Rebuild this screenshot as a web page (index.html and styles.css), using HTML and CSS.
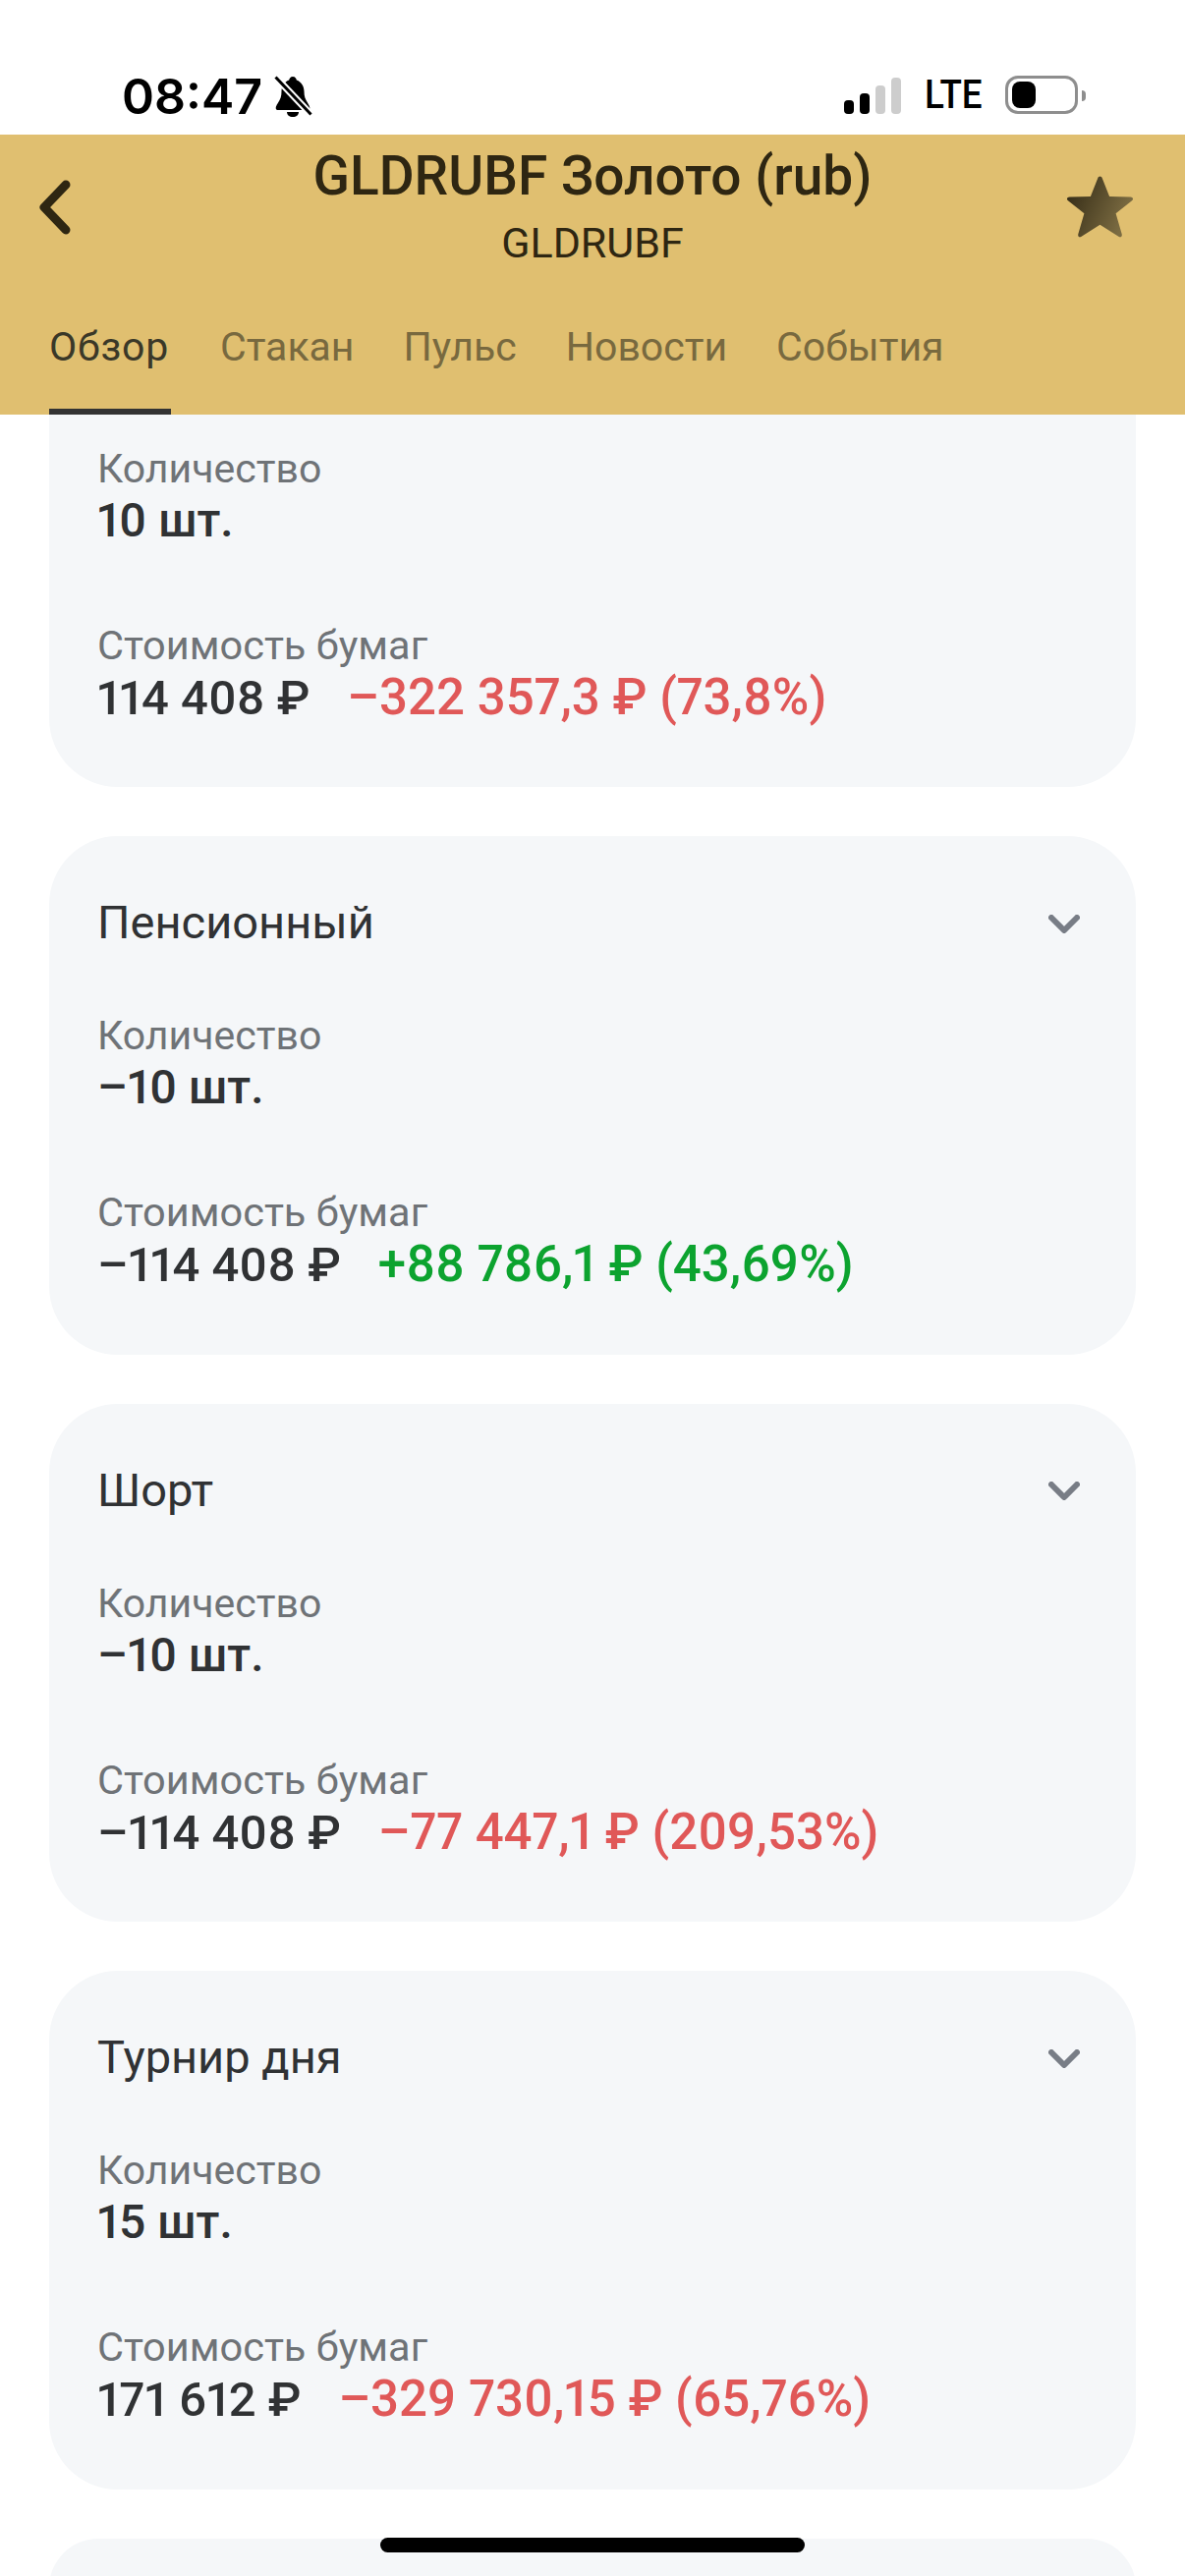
FILE: index.html
```html
<!DOCTYPE html>
<html lang="ru">
<head>
  <meta charset="UTF-8" />
  <title>GLDRUBF</title>
  <link rel="stylesheet" href="styles.css">
</head>
<body>
  <div class="screen">
    <div class="status-bar">
      <div class="status-left">
        <span class="time">08:47</span>
        <svg class="bell" viewBox="0 0 39 42" width="39" height="42">
          <path d="M19 1c2.500 0 3.500 2 3.800 3.500C28 6.500 30.500 11 30.500 16c0 5 1 8 4 12.500 2 3 2.500 5.500 1 6.500H3c-2-1-1.500-3.500.5-6.500C6.500 24 7.500 21 7.500 16c0-5 2.500-9.500 7.700-11.500C15.500 3 16.500 1 19 1z" fill="#000"/>
          <path d="M13 37h12c0 3-2.500 5-6 5s-6-2-6-5z" fill="#000"/>
          <path d="M2 2l35 37" stroke="#fff" stroke-width="7"/>
          <path d="M1.500 1.500l36 38" stroke="#000" stroke-width="3"/>
        </svg>
      </div>
      <div class="status-right">
        <div class="signal">
          <span class="bar bar-1"></span>
          <span class="bar bar-2"></span>
          <span class="bar bar-3"></span>
          <span class="bar bar-4"></span>
        </div>
        <span class="network">LTE</span>
        <div class="battery"><span class="battery-level"></span></div>
        <span class="battery-nub"></span>
      </div>
    </div>

    <header class="top">
      <div class="title-row">
        <div class="side">
          <svg class="back" viewBox="0 0 32 56" width="32" height="56">
            <path d="M27 5L5 28l22 23" fill="none" stroke="#2e2612" stroke-width="9" stroke-linecap="round" stroke-linejoin="round"/>
          </svg>
        </div>
        <div class="title-box">
          <div class="title">GLDRUBF Золото (rub)</div>
          <div class="subtitle">GLDRUBF</div>
        </div>
        <div class="side side-right">
          <svg class="star" viewBox="0 0 69 64" width="69" height="64">
            <defs>
              <linearGradient id="starFill" x1="0" y1="0" x2="1" y2="0.4">
                <stop offset="0" stop-color="#2e2612"/>
                <stop offset="1" stop-color="#7c6c42"/>
              </linearGradient>
            </defs>
            <path d="M34.500 1.500c1 0 1.800.7 2.300 1.900l7.300 18.700 21.300.5c2.600.1 3.500 2 1.600 3.600L50.600 39.300l6.100 21c.6 2.500-1.200 3.800-3.300 2.400L34.500 50.800 15.600 62.700c-2.100 1.400-3.900.1-3.300-2.400l6.100-21L2 26.200C.1 24.600 1 22.700 3.600 22.600l21.300-.5 7.300-18.700c.5-1.200 1.300-1.900 2.300-1.900z" fill="url(#starFill)"/>
          </svg>
        </div>
      </div>
      <nav class="tabs">
        <span class="tab tab-active">Обзор</span>
        <span class="tab">Стакан</span>
        <span class="tab">Пульс</span>
        <span class="tab">Новости</span>
        <span class="tab">События</span>
      </nav>
    </header>

    <main class="list">
      <section class="card card-cut">
        <div class="label">Количество</div>
        <div class="value qty">10 шт.</div>
        <div class="label label-cost">Стоимость бумаг</div>
        <div class="value">114 408 ₽<span class="change loss">–322 357,3 ₽ (73,8%)</span></div>
      </section>

      <section class="card">
        <div class="card-head">
          <span class="card-name">Пенсионный</span>
          <svg class="chevron" viewBox="0 0 32 19" width="32" height="19"><path d="M3 3l13 13L29 3" fill="none" stroke="#787d86" stroke-width="6" stroke-linecap="round" stroke-linejoin="round"/></svg>
        </div>
        <div class="label">Количество</div>
        <div class="value qty">–10 шт.</div>
        <div class="label label-cost">Стоимость бумаг</div>
        <div class="value">–114 408 ₽<span class="change gain">+88 786,1 ₽ (43,69%)</span></div>
      </section>

      <section class="card">
        <div class="card-head">
          <span class="card-name">Шорт</span>
          <svg class="chevron" viewBox="0 0 32 19" width="32" height="19"><path d="M3 3l13 13L29 3" fill="none" stroke="#787d86" stroke-width="6" stroke-linecap="round" stroke-linejoin="round"/></svg>
        </div>
        <div class="label">Количество</div>
        <div class="value qty">–10 шт.</div>
        <div class="label label-cost">Стоимость бумаг</div>
        <div class="value">–114 408 ₽<span class="change loss">–77 447,1 ₽ (209,53%)</span></div>
      </section>

      <section class="card">
        <div class="card-head">
          <span class="card-name">Турнир дня</span>
          <svg class="chevron" viewBox="0 0 32 19" width="32" height="19"><path d="M3 3l13 13L29 3" fill="none" stroke="#787d86" stroke-width="6" stroke-linecap="round" stroke-linejoin="round"/></svg>
        </div>
        <div class="label">Количество</div>
        <div class="value qty">15 шт.</div>
        <div class="label label-cost">Стоимость бумаг</div>
        <div class="value">171 612 ₽<span class="change loss">–329 730,15 ₽ (65,76%)</span></div>
      </section>

      <section class="card card-next"></section>
    </main>

    <div class="home-bar"></div>
  </div>
</body>
</html>
```

FILE: styles.css
```css
:root {
  --gold: #e0bf70;
  --card-color: #f5f7f9;
  --dark: #2e2612;
  --text-color: #303234;
  --muted: #6f7377;
  --red: #e05858;
  --green: #0ca32f;
}

* {
  box-sizing: border-box;
}

body {
  margin: 0;
  background-color: #ffffff;
  font-family: Roboto, 'Noto Sans', sans-serif;
}

.screen {
  position: relative;
  display: flex;
  flex-direction: column;
  width: 1206px;
  height: 2622px;
  overflow: hidden;
}

/* status bar */
.status-bar {
  display: flex;
  justify-content: space-between;
  flex-shrink: 0;
  height: 137px;
  padding: 77px 101px 0 124px;
}

.status-left {
  display: flex;
  align-items: flex-start;
  gap: 12px;
}

.time {
  font-family: Inter, sans-serif;
  font-size: 50px;
  font-weight: 600;
  line-height: 42px;
  color: #000;
}

.status-right {
  display: flex;
  align-items: flex-start;
}

.signal {
  display: flex;
  align-items: flex-end;
  gap: 6px;
  height: 39px;
  margin-right: 24px;
}

.bar {
  width: 10px;
  border-radius: 4px;
  background-color: #000;
}

.bar-1 { height: 14px; }
.bar-2 { height: 21px; }
.bar-3 { height: 29px; background-color: #cdcdcd; }
.bar-4 { height: 37px; background-color: #cdcdcd; }

.network {
  width: 58px;
  margin-right: 24px;
  font-size: 40px;
  font-weight: 500;
  line-height: 40px;
  color: #000;
  transform: scaleX(0.92);
  transform-origin: left center;
}

.battery {
  width: 74px;
  height: 39px;
  padding: 3px 4px;
  border: 3px solid #8e8e8e;
  border-radius: 13px;
}

.battery-level {
  display: block;
  width: 24px;
  height: 27px;
  border-radius: 8px;
  background-color: #000;
}

.battery-nub {
  width: 4px;
  height: 11px;
  margin: 15px 0 0 4px;
  border-radius: 0 4px 4px 0;
  background-color: #8e8e8e;
}

/* gold header */
.top {
  display: flex;
  flex-direction: column;
  justify-content: space-between;
  flex-shrink: 0;
  height: 285px;
  background-color: var(--gold);
}

.title-row {
  display: flex;
  justify-content: space-between;
  padding: 0 52px 0 40px;
}

.side {
  width: 100px;
}

.side-right {
  display: flex;
  justify-content: flex-end;
  width: 88px;
}

.back {
  margin-top: 46px;
}

.title-box {
  padding-top: 12px;
  text-align: center;
  color: var(--dark);
}

.title {
  font-size: 55px;
  font-weight: 500;
  line-height: 60px;
}

.subtitle {
  font-size: 43px;
  line-height: 52px;
  margin-top: 12px;
}

.star {
  margin-top: 41px;
}

.tabs {
  display: flex;
  gap: 50px;
  padding-left: 50px;
}

.tab {
  height: 94px;
  font-size: 41px;
  line-height: 50px;
  color: #78693f;
}

.tab-active {
  width: 124px;
  letter-spacing: 0.8px;
  color: #3a3828;
  box-shadow: inset 0 -6px 0 #333333;
}

/* cards */
.list {
  display: flex;
  flex-direction: column;
  gap: 50px;
  padding: 0 50px;
}

.card {
  flex-shrink: 0;
  padding: 0 49px;
  height: 527.7px;
  border-radius: 70px;
  background-color: var(--card-color);
}

.card-cut {
  height: 379px;
  padding-top: 30px;
  border-radius: 0 0 70px 70px;
}

.card-next {
  height: 100px;
}

.card-head {
  display: flex;
  justify-content: space-between;
  align-items: center;
  height: 178px;
}

.card-name {
  font-size: 47px;
  line-height: 56px;
  margin-top: -2px;
  color: var(--text-color);
}

.chevron {
  margin-right: 8px;
}

.label {
  font-size: 41px;
  line-height: 50px;
  color: var(--muted);
}

.label-cost {
  margin-top: 74px;
  font-size: 41.5px;
}

.value {
  font-size: 49px;
  font-weight: 500;
  line-height: 56px;
  font-variant-numeric: proportional-nums;
  color: var(--text-color);
}

.qty {
  font-size: 48px;
}

.change {
  margin-left: 38px;
  font-size: 51px;
}

.loss {
  color: var(--red);
}

.gain {
  color: var(--green);
}

.home-bar {
  position: absolute;
  left: 387px;
  top: 2583px;
  width: 432px;
  height: 15px;
  border-radius: 8px;
  background-color: #000;
}
```
